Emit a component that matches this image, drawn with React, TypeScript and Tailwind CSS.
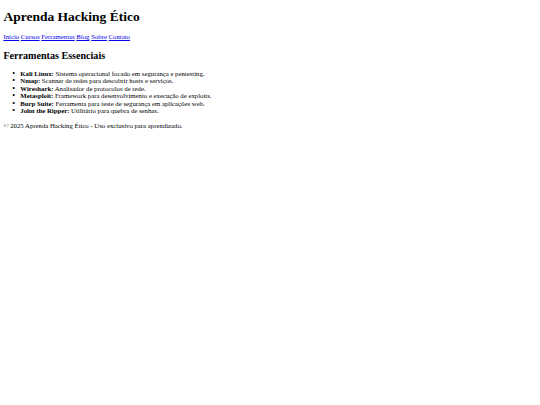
import React from "react";

const tools: [string, string][] = [
  ["Kali Linux:", "Sistema operacional focado em segurança e pentesting."],
  ["Nmap:", "Scanner de redes para descobrir hosts e serviços."],
  ["Wireshark:", "Analisador de protocolos de rede."],
  ["Metasploit:", "Framework para desenvolvimento e execução de exploits."],
  ["Burp Suite:", "Ferramenta para teste de segurança em aplicações web."],
  ["John the Ripper:", "Utilitário para quebra de senhas."],
];

const links = ["Início", "Cursos", "Ferramentas", "Blog", "Sobre", "Contato"];

export default function App() {
  return (
    <div className="min-h-[405px] w-[540px] bg-white text-black [font-family:'Liberation_Serif','Times_New_Roman',serif]">
      <div className="px-[3.4px] pt-[8.7px] text-[6.75px] leading-[7.5px]">
        <header>
          <h1 className="text-[13.5px] font-bold leading-[15.5px]">Aprenda Hacking Ético</h1>
          <nav className="mt-[9.1px]">
            {links.map((l, i) => (
              <React.Fragment key={l}>
                <a href="#" className="text-[#0000ee] underline">{l}</a>
                {i < links.length - 1 ? " " : null}
              </React.Fragment>
            ))}
          </nav>
        </header>
        <main>
          <section>
            <h2 className="mt-[9.3px] text-[10.1px] font-bold leading-[11.6px]">Ferramentas Essenciais</h2>
            <ul className="mt-[8px] list-none pl-[16.9px]">
              {tools.map(([t, d]) => (
                <li
                  key={t}
                  className="before:-ml-[8px] before:inline-block before:w-[8px] before:text-[8px] before:content-['•']"
                >
                  <strong className="font-bold">{t}</strong> {d}
                </li>
              ))}
            </ul>
          </section>
        </main>
        <footer>
          <p className="mt-[7px]">© 2025 Aprenda Hacking Ético - Uso exclusivo para aprendizado.</p>
        </footer>
      </div>
    </div>
  );
}
